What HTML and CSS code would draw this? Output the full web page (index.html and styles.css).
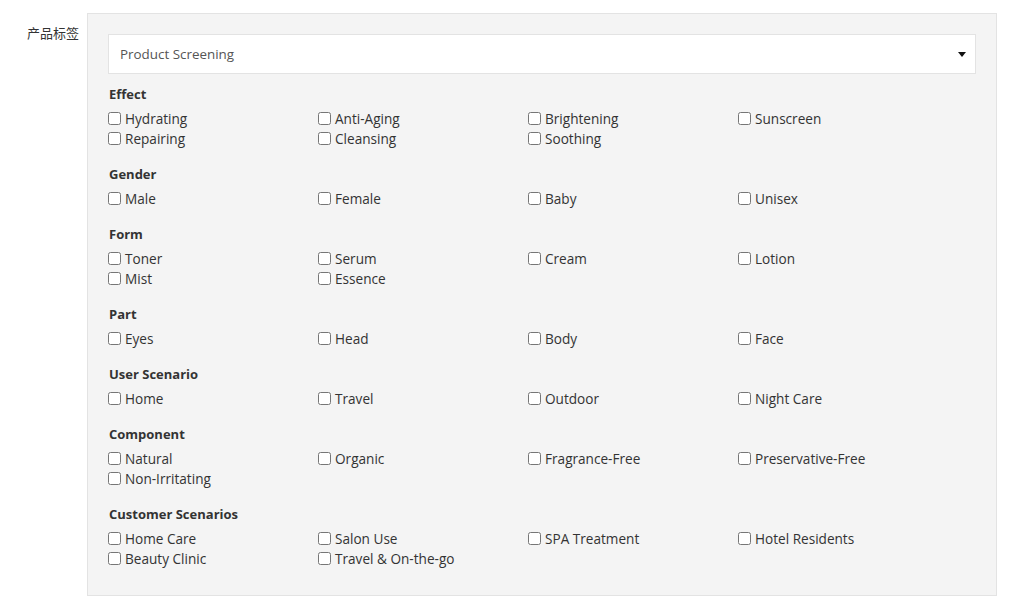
FILE: index.html
```html
<!DOCTYPE html>
<html lang="zh-CN">

<head>
    <meta charset="UTF-8">
    <meta name="viewport" content="width=device-width, initial-scale=1.0">
    <title>产品标签</title>
    <link rel="stylesheet" href="styles.css">
</head>

<body>
    <div class="form-row">
        <label class="form-label">产品标签</label>
        <div class="panel">
            <div class="select-wrap">
                <select class="select">
                    <option>Product Screening</option>
                </select>
            </div>

            <div class="group">
                <div class="group-title">Effect</div>
                <div class="options">
                    <label class="opt"><input type="checkbox">Hydrating</label>
                    <label class="opt"><input type="checkbox">Anti-Aging</label>
                    <label class="opt"><input type="checkbox">Brightening</label>
                    <label class="opt"><input type="checkbox">Sunscreen</label>
                    <label class="opt"><input type="checkbox">Repairing</label>
                    <label class="opt"><input type="checkbox">Cleansing</label>
                    <label class="opt"><input type="checkbox">Soothing</label>
                </div>
            </div>

            <div class="group">
                <div class="group-title">Gender</div>
                <div class="options">
                    <label class="opt"><input type="checkbox">Male</label>
                    <label class="opt"><input type="checkbox">Female</label>
                    <label class="opt"><input type="checkbox">Baby</label>
                    <label class="opt"><input type="checkbox">Unisex</label>
                </div>
            </div>

            <div class="group">
                <div class="group-title">Form</div>
                <div class="options">
                    <label class="opt"><input type="checkbox">Toner</label>
                    <label class="opt"><input type="checkbox">Serum</label>
                    <label class="opt"><input type="checkbox">Cream</label>
                    <label class="opt"><input type="checkbox">Lotion</label>
                    <label class="opt"><input type="checkbox">Mist</label>
                    <label class="opt"><input type="checkbox">Essence</label>
                </div>
            </div>

            <div class="group">
                <div class="group-title">Part</div>
                <div class="options">
                    <label class="opt"><input type="checkbox">Eyes</label>
                    <label class="opt"><input type="checkbox">Head</label>
                    <label class="opt"><input type="checkbox">Body</label>
                    <label class="opt"><input type="checkbox">Face</label>
                </div>
            </div>

            <div class="group">
                <div class="group-title">User Scenario</div>
                <div class="options">
                    <label class="opt"><input type="checkbox">Home</label>
                    <label class="opt"><input type="checkbox">Travel</label>
                    <label class="opt"><input type="checkbox">Outdoor</label>
                    <label class="opt"><input type="checkbox">Night Care</label>
                </div>
            </div>

            <div class="group">
                <div class="group-title">Component</div>
                <div class="options">
                    <label class="opt"><input type="checkbox">Natural</label>
                    <label class="opt"><input type="checkbox">Organic</label>
                    <label class="opt"><input type="checkbox">Fragrance-Free</label>
                    <label class="opt"><input type="checkbox">Preservative-Free</label>
                    <label class="opt"><input type="checkbox">Non-Irritating</label>
                </div>
            </div>

            <div class="group">
                <div class="group-title">Customer Scenarios</div>
                <div class="options">
                    <label class="opt"><input type="checkbox">Home Care</label>
                    <label class="opt"><input type="checkbox">Salon Use</label>
                    <label class="opt"><input type="checkbox">SPA Treatment</label>
                    <label class="opt"><input type="checkbox">Hotel Residents</label>
                    <label class="opt"><input type="checkbox">Beauty Clinic</label>
                    <label class="opt"><input type="checkbox">Travel &amp; On-the-go</label>
                </div>
            </div>
        </div>
    </div>
</body>

</html>
```

FILE: styles.css
```css
body {
    margin: 0;
    padding: 13px 0 0 0;
    font-family: "Open Sans", "Noto Sans CJK SC", sans-serif;
    font-size: 13px;
    color: #333;
    background: #fff;
}

.form-row {
    display: flex;
    align-items: flex-start;
}

.form-label {
    width: 79px;
    padding-right: 8px;
    padding-top: 11px;
    text-align: right;
    font-size: 13px;
    line-height: 18px;
    color: #333;
}

.panel {
    width: 868px;
    padding: 20px 20px 11px 20px;
    background: #f4f4f4;
    border: 1px solid #e3e3e3;
}

.select-wrap {
    position: relative;
    margin-bottom: 10px;
}

.select {
    display: block;
    width: 100%;
    height: 40px;
    padding: 0 30px 0 11px;
    font-family: inherit;
    font-size: 13.4px;
    color: #555;
    background: #fff;
    border: 1px solid #e3e3e3;
    border-radius: 0;
    appearance: none;
    -webkit-appearance: none;
    outline: none;
}

.select-wrap::after {
    content: "";
    position: absolute;
    right: 10px;
    top: 18px;
    border-left: 4.5px solid transparent;
    border-right: 4.5px solid transparent;
    border-top: 5px solid #111;
    pointer-events: none;
}

.group {
    margin-bottom: 16px;
}

.group-title {
    font-weight: bold;
    line-height: 20px;
    margin-bottom: 4px;
    padding-left: 1px;
}

.options {
    display: grid;
    grid-template-columns: repeat(4, 210px);
}

.opt {
    box-sizing: border-box;
    display: flex;
    align-items: center;
    height: 20px;
    line-height: 18px;
    font-size: 13.6px;
    white-space: nowrap;
    padding-top: 1px;
}

.opt input {
    width: 13px;
    height: 13px;
    margin: -1px 4px 0 0;
}
```
